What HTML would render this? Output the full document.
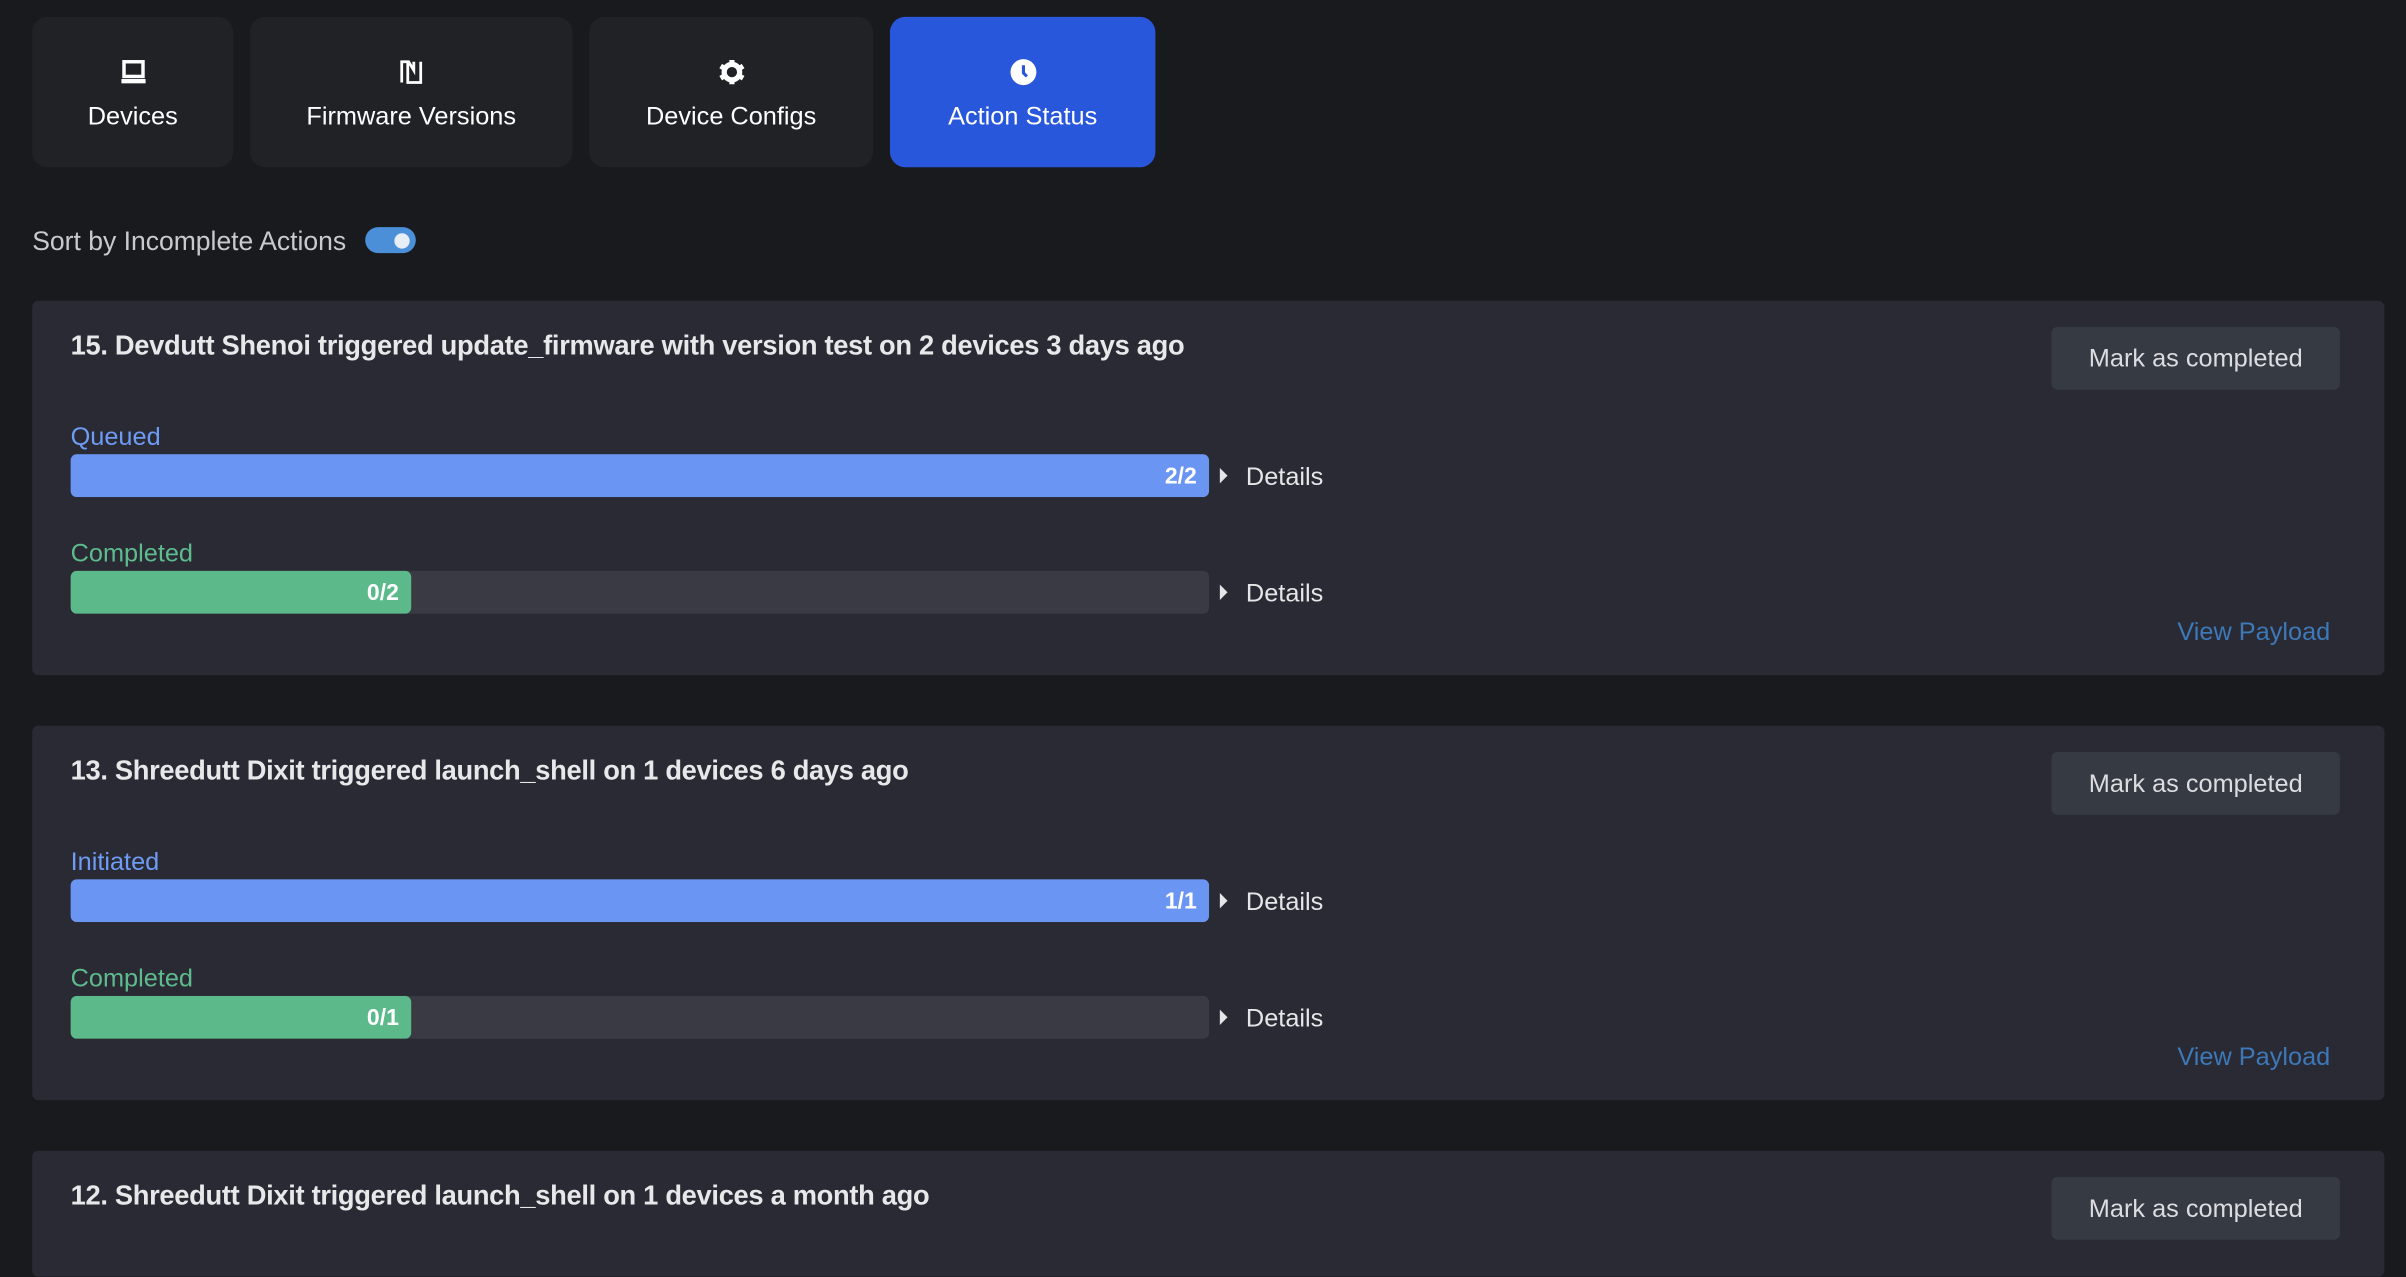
<!DOCTYPE html>
<html><head><meta charset="utf-8"><style>
html,body{margin:0;padding:0;background:#191a1e;width:2406px;height:1276px;overflow:hidden}
#w{position:absolute;left:0;top:0;width:1568px;height:832px;overflow:hidden;transform:scale(1.5344);transform-origin:0 0;font-family:"Liberation Sans",sans-serif;color:#fff}
.tab{position:absolute;top:11px;height:98px;background:#212226;border-radius:10px;text-align:center;font-size:16.5px}
.tab svg{position:absolute;left:50%;top:27px;margin-left:-9px}
.tab span{position:absolute;left:0;right:0;top:56px}
.card{position:absolute;left:21px;width:1533px;height:244px;background:#292a33;border-radius:4px}
.title{position:absolute;left:25px;top:19px;font-size:17.8px;font-weight:bold;color:#e8e8ea;letter-spacing:-0.2px}
.btn{position:absolute;left:1316px;top:17px;width:188px;height:41px;background:#363a43;border-radius:4px;color:#dcdde0;font-size:16.5px;line-height:43px;text-align:center}
.lbl{position:absolute;left:25px;font-size:16.5px}
.bar{position:absolute;left:25px;width:742px;height:28px;background:#393a44;border-radius:4px;overflow:hidden}
.fill{height:100%;border-radius:4px;text-align:right;font-size:15px;font-weight:bold;line-height:30px;box-sizing:border-box;padding-right:8px;color:#fff}
.det{position:absolute;left:774px;font-size:16.5px;color:#e6e6e8}
.det:before{content:"";display:inline-block;border-left:5px solid #e6e6e8;border-top:5px solid transparent;border-bottom:5px solid transparent;margin-right:12px;vertical-align:1px}
.vp{position:absolute;left:1398px;top:207px;color:#3d78b8;font-size:16.5px}
</style></head><body><div id="w">
<div class="tab" style="left:21px;width:131px"><svg width="18" height="18" viewBox="0 0 16 16"><rect x="2.5" y="2" width="11" height="8.5" fill="none" stroke="#fff" stroke-width="2"/><rect x="1" y="12" width="14" height="2.5" fill="#fff"/></svg><span>Devices</span></div>
<div class="tab" style="left:163px;width:210px"><svg width="18" height="18" viewBox="0 0 16 16"><path d="M2.5 14V2h4l3 5V2M6 2v12h4.5V14M13.5 2v12h-4" fill="none" stroke="#fff" stroke-width="1.6"/></svg><span>Firmware Versions</span></div>
<div class="tab" style="left:384px;width:185px"><svg width="18" height="18" viewBox="0 0 16 16"><circle cx="8" cy="8" r="4.5" fill="none" stroke="#fff" stroke-width="3"/><g stroke="#fff" stroke-width="3"><path d="M8 1v3M8 12v3M1.5 4.5l2.5 1.5M12 10l2.5 1.5M1.5 11.5L4 10M12 6l2.5-1.5"/></g></svg><span>Device Configs</span></div>
<div class="tab" style="left:580px;width:173px;background:#2957db"><svg width="18" height="18" viewBox="0 0 16 16"><circle cx="8" cy="8" r="7.5" fill="#fff"/><path d="M8 4v4.5l2 2" stroke="#2957db" stroke-width="1.8" fill="none"/></svg><span>Action Status</span></div>
<div style="position:absolute;left:21px;top:147px;font-size:17.3px;color:#c9cacd">Sort by Incomplete Actions</div>
<div style="position:absolute;left:238px;top:148px;width:33px;height:17px;border-radius:9px;background:#4a8fd8"><div style="position:absolute;right:4px;top:3.5px;width:10px;height:10px;border-radius:5px;background:#e8eef5"></div></div>

<div class="card" style="top:196px">
<div class="title">15. Devdutt Shenoi triggered update_firmware with version test on 2 devices 3 days ago</div>
<div class="btn">Mark as completed</div>
<div class="lbl" style="top:80px;color:#6e9cf5">Queued</div>
<div class="bar" style="top:100px"><div class="fill" style="width:100%;background:#6a95f3">2/2</div></div>
<div class="det" style="top:106px">Details</div>
<div class="lbl" style="top:156px;color:#5dbb8d">Completed</div>
<div class="bar" style="top:176px"><div class="fill" style="width:222px;background:#5cb98a">0/2</div></div>
<div class="det" style="top:182px">Details</div>
<div class="vp">View Payload</div>
</div>

<div class="card" style="top:473px">
<div class="title">13. Shreedutt Dixit triggered launch_shell on 1 devices 6 days ago</div>
<div class="btn">Mark as completed</div>
<div class="lbl" style="top:80px;color:#6e9cf5">Initiated</div>
<div class="bar" style="top:100px"><div class="fill" style="width:100%;background:#6a95f3">1/1</div></div>
<div class="det" style="top:106px">Details</div>
<div class="lbl" style="top:156px;color:#5dbb8d">Completed</div>
<div class="bar" style="top:176px"><div class="fill" style="width:222px;background:#5cb98a">0/1</div></div>
<div class="det" style="top:182px">Details</div>
<div class="vp">View Payload</div>
</div>

<div class="card" style="top:750px;height:82px">
<div class="title">12. Shreedutt Dixit triggered launch_shell on 1 devices a month ago</div>
<div class="btn">Mark as completed</div>
</div>
</div></body></html>
